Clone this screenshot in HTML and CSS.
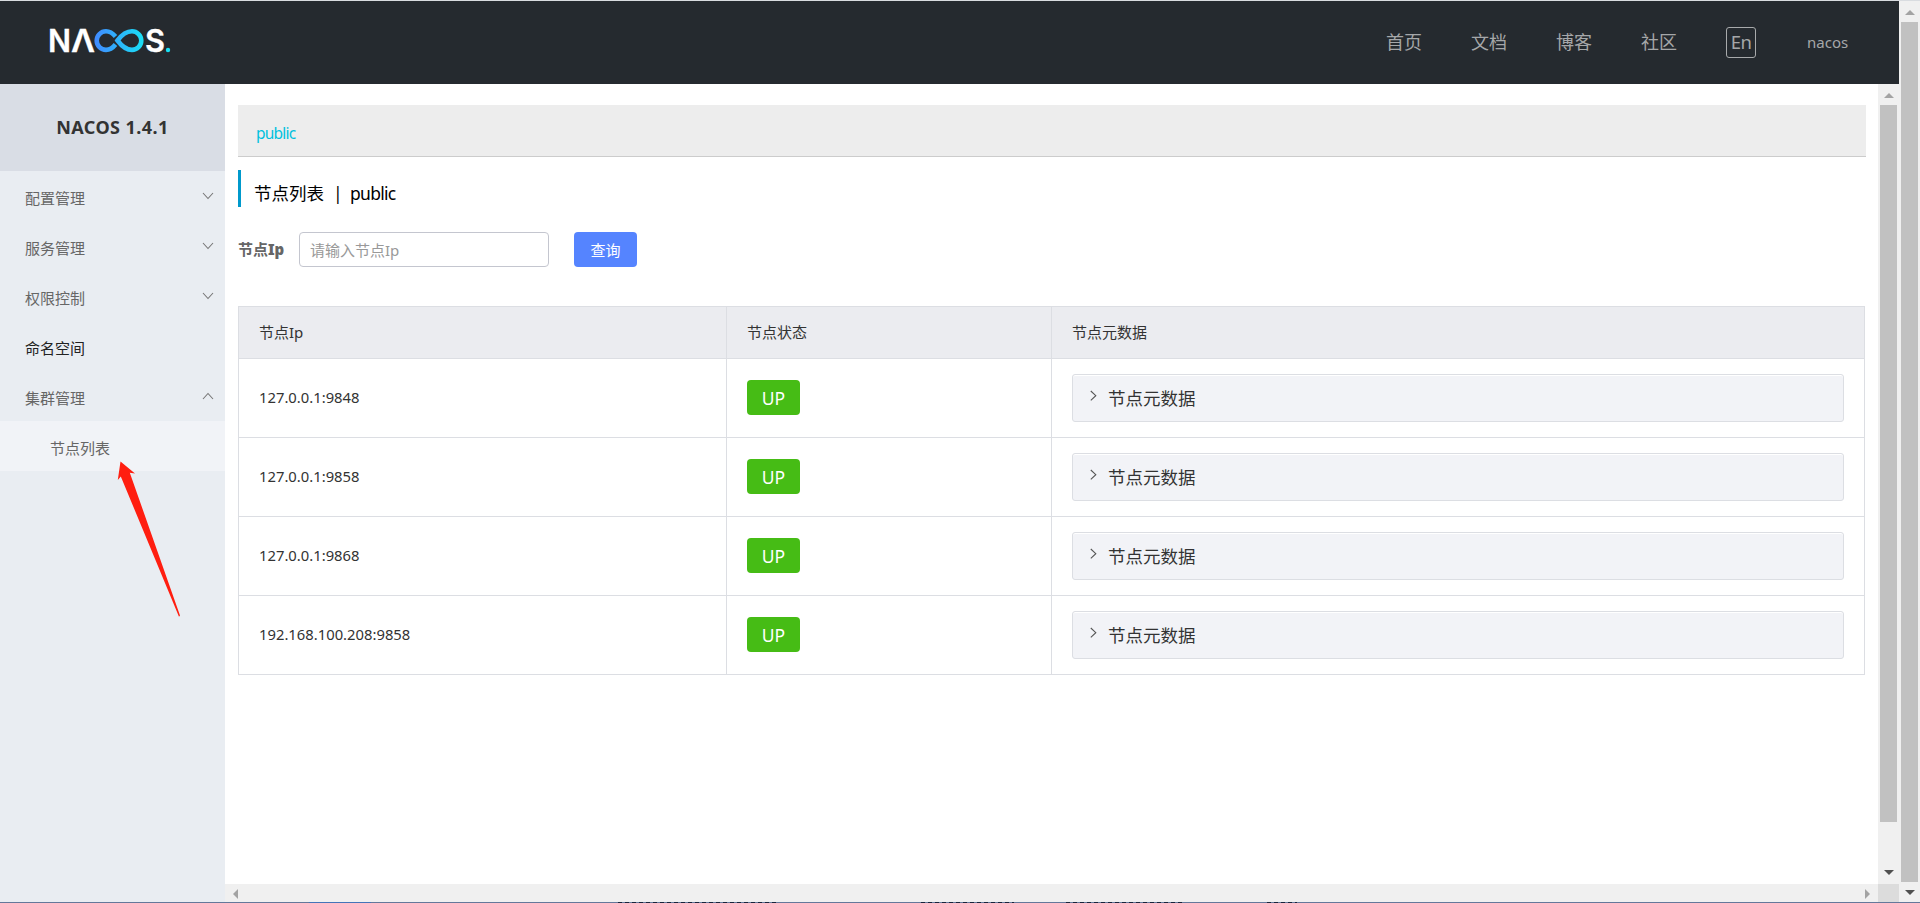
FILE: index.html
```html
<!DOCTYPE html>
<html lang="zh">
<head>
<meta charset="utf-8">
<title>Nacos</title>
<link rel="stylesheet" href="styles.css">
</head>
<body>
<div class="window">
  <div class="page">
    <header class="header">
      <svg class="logo" width="128" height="48" viewBox="-2 -10 128 48">
        <defs><linearGradient id="g" gradientUnits="userSpaceOnUse" x1="46" y1="0" x2="96" y2="0"><stop offset="0" stop-color="#4289ff"/><stop offset="1" stop-color="#18e0f5"/></linearGradient></defs>
        <g class="logo-text">
          <text x="0" y="25" textLength="23" lengthAdjust="spacingAndGlyphs">N</text>
          <text x="23" y="25" textLength="24" lengthAdjust="spacingAndGlyphs">Λ</text>
          <text x="97" y="25" textLength="20" lengthAdjust="spacingAndGlyphs">S</text>
        </g>
        <g fill="none" stroke="url(#g)" stroke-width="4.600">
          <path d="M67.500 9.500C64.500 6 61.500 4.300 58 4.300a9.300 9.300 0 0 0 0 18.600c3.500 0 6.500-1.700 9.500-5.400"/>
          <path d="M69.500 13.500C74 7.500 78 4.300 84 4.300a9.300 9.300 0 0 1 0 18.600c-6 0-10-3.400-14.500-9.400z"/>
        </g>
        <circle cx="120" cy="23" r="2.200" fill="#18e0f5"/>
      </svg>
      <nav class="nav">
        <span>首页</span><span>文档</span><span>博客</span><span>社区</span>
        <span class="lang">En</span>
        <span class="user">nacos</span>
      </nav>
    </header>
    <div class="body">
      <aside class="side">
        <div class="side-title"><span>NACOS 1.4.1</span></div>
        <div class="item"><span>配置管理</span><svg class="chev" viewBox="0 0 12 8"><path d="M1 1l5 5.500 5-5.500"/></svg></div>
        <div class="item"><span>服务管理</span><svg class="chev" viewBox="0 0 12 8"><path d="M1 1l5 5.500 5-5.500"/></svg></div>
        <div class="item"><span>权限控制</span><svg class="chev" viewBox="0 0 12 8"><path d="M1 1l5 5.500 5-5.500"/></svg></div>
        <div class="item dark"><span>命名空间</span></div>
        <div class="item"><span>集群管理</span><svg class="chev" viewBox="0 0 12 8"><path d="M1 7l5-5.500 5 5.500"/></svg></div>
        <div class="item sub"><span>节点列表</span></div>
        <svg class="arrow" width="66" height="160" viewBox="0 0 66 160"><path fill="#ff1e10" d="M5.500 1.500L20 13.500 14.800 12.700 65 155.500 64 156.700 5.800 16.500 2.800 20z"/></svg>
      </aside>
      <div class="scroller">
        <div class="view">
          <main class="main">
            <div class="crumb"><span>public</span></div>
            <h1 class="title"><span class="t1">节点列表</span><span class="bar">|</span><span class="t2">public</span></h1>
            <div class="form">
              <label>节点<b>Ip</b></label>
              <div class="input">请输入节点<i>Ip</i></div>
              <button class="btn">查询</button>
            </div>
            <div class="table">
              <div class="row head"><div>节点<i>Ip</i></div><div>节点状态</div><div>节点元数据</div></div>
              <div class="row"><div>127.0.0.1:9848</div><div><span class="tag">UP</span></div><div><div class="box"><svg viewBox="0 0 7 12"><path d="M.8 1l5 4.700-5 4.700"/></svg><span>节点元数据</span></div></div></div>
              <div class="row"><div>127.0.0.1:9858</div><div><span class="tag">UP</span></div><div><div class="box"><svg viewBox="0 0 7 12"><path d="M.8 1l5 4.700-5 4.700"/></svg><span>节点元数据</span></div></div></div>
              <div class="row"><div>127.0.0.1:9868</div><div><span class="tag">UP</span></div><div><div class="box"><svg viewBox="0 0 7 12"><path d="M.8 1l5 4.700-5 4.700"/></svg><span>节点元数据</span></div></div></div>
              <div class="row"><div>192.168.100.208:9858</div><div><span class="tag">UP</span></div><div><div class="box"><svg viewBox="0 0 7 12"><path d="M.8 1l5 4.700-5 4.700"/></svg><span>节点元数据</span></div></div></div>
            </div>
          </main>
          <div class="vbar inner"><svg viewBox="0 0 10 5"><path fill="#a3a3a3" d="M0 5h10L5 0z"/></svg><div class="thumb"></div><svg viewBox="0 0 10 5"><path fill="#505050" d="M0 0h10L5 5z"/></svg></div>
        </div>
        <div class="hbar"><svg viewBox="0 0 5 10"><path d="M5 0v10L0 5z"/></svg><svg viewBox="0 0 5 10"><path d="M0 0v10l5-5z"/></svg><div class="corner"></div></div>
      </div>
    </div>
  </div>
  <div class="vbar outer"><svg viewBox="0 0 10 5"><path fill="#a3a3a3" d="M0 5h10L5 0z"/></svg><div class="thumb"></div><svg viewBox="0 0 10 5"><path fill="#505050" d="M0 0h10L5 5z"/></svg></div>
</div>
<div class="edge"><i class="e1"></i><i class="e2"></i><i class="e3"></i><i class="e4"></i><i class="e5"></i></div>
</body>
</html>
```
FILE: styles.css
```css
* { box-sizing: border-box; }
html, body { margin: 0; height: 903px; overflow: hidden; }
body { font: 15px "Noto Sans", "Noto Sans CJK SC", sans-serif; color: #333; background: #fff; border-top: 1px solid #d9dce0; }
i { font-style: normal; }
.window { display: flex; height: 901px; }
.page { width: 1899px; display: flex; flex-direction: column; }
.header { height: 83px; background: #252a2f; display: flex; justify-content: space-between; padding: 16px 49px 0 46px; }
.logo-text { font: 600 31px Inter, sans-serif; fill: #fff; stroke: #fff; stroke-width: .3; }
.nav { display: flex; padding-top: 10px; color: #a5a7a9; font: 18px/29px "Noto Sans CJK SC", sans-serif; }
.nav span { width: 36px; margin-right: 49px; white-space: nowrap; }
.nav .lang { width: 30px; height: 31px; border: 1px solid #a8aaac; margin-right: 51px; border-radius: 3px; text-align: center; font: 18.500px/27px "Noto Sans", sans-serif; letter-spacing: -.5px; }
.nav .user { width: 43px; margin: 0; font: 15px/31px "Noto Sans", sans-serif; }
.body { flex: 1; display: flex; }
.side { width: 225px; background: #e9edf2; position: relative; }
.side-title { height: 87px; background: #d9dde5; text-align: center; font: 700 18px/86px "Noto Sans", sans-serif; letter-spacing: .45px; }
.item { height: 50px; display: flex; justify-content: space-between; padding: 0 11px 0 25px; line-height: 54px; color: #666; font-family: "Noto Sans CJK SC", sans-serif; }
.item.dark { color: #222; }
.item.sub { background: #f1f3f7; padding-left: 50px; }
.chev { width: 12px; height: 8px; margin-top: 21px; fill: none; stroke: #777; stroke-width: 1.100; }
.arrow { position: absolute; left: 115px; top: 376px; }
.scroller { flex: 1; display: flex; flex-direction: column; }
.view { height: 800px; display: flex; }
.main { width: 1653px; padding: 21px 12px 0 13px; }
.crumb { height: 52px; background: #ededed; border-bottom: 1px solid #ccc; padding-left: 18px; font-size: 15.500px; line-height: 57px; letter-spacing: -.8px; color: #00c1de; }
.title { margin: 13px 0 25px; height: 37px; border-left: 3px solid #09c; padding-left: 13px; color: #000; font-size: 17.500px; line-height: 46px; font-weight: 400; display: flex; }
.t1 { font-family: "Noto Sans CJK SC", sans-serif; width: 79px; }
.bar { width: 17px; }
.t2 { letter-spacing: -.7px; }
.form { display: flex; height: 35px; line-height: 35px; }
label { width: 61px; color: #666; font-weight: 700; }
.input { width: 250px; border: 1px solid #c4c6cf; border-radius: 4px; padding-left: 10px; color: #999; }
.btn { width: 63px; margin-left: 25px; padding: 0; border: 0; border-radius: 4px; background: #5584ff; color: #fff; font: 15px/33px "Noto Sans CJK SC", sans-serif; }
.table { margin-top: 39px; width: 1627px; border: 1px solid #dcdee3; border-bottom: 0; }
.row { height: 79px; display: grid; grid-template-columns: 487px 325px 1fr; border-bottom: 1px solid #dcdee3; font-size: 14.800px; line-height: 76px; }
.row > div { padding-left: 20px; border-left: 1px solid #dcdee3; display: flex; }
.row > div:first-child { border-left: 0; }
.head { height: 52px; background: #ebecf0; font-size: 15px; line-height: 51px; }
.tag { width: 53px; height: 35px; margin-top: 21px; border-radius: 4px; background: #46bc15; color: #fff; text-align: center; font-size: 17.500px; line-height: 36px; }
.box { width: 772px; height: 48px; margin-top: 15px; border: 1px solid #dcdee3; border-radius: 3px; background: #f2f3f7; box-shadow: inset 0 1px #fff; display: flex; padding-left: 17px; font: 17.500px/46px "Noto Sans CJK SC", sans-serif; }
.box svg { width: 7px; height: 12px; margin: 15px 11px 0 0; fill: none; stroke: #555; stroke-width: 1.100; }
.vbar { width: 21px; background: #f0f0f0; display: flex; flex-direction: column; align-items: center; }
.vbar svg { width: 10px; height: 5px; }
.vbar .thumb { width: 17px; background: #c1c1c1; }
.inner svg:first-child { margin: 9px 0 7px; }
.inner .thumb { height: 717px; }
.inner svg:last-child { margin-top: 48px; }
.outer svg:first-child { margin: 9px 0 7px; }
.outer .thumb { height: 860px; }
.outer svg:last-child { margin-top: 8px; }
.hbar { height: 18px; background: #f0f0f0; display: flex; align-items: center; }
.hbar svg { width: 5px; height: 10px; margin: 2px 0 0 8px; fill: #a3a3a3; }
.hbar svg + svg { margin-left: auto; margin-right: 8px; }
.corner { width: 21px; height: 18px; background: #dcdcdc; }
.edge { height: 1px; background: #64789a; display: flex; }
.edge i { height: 1px; background: repeating-linear-gradient(90deg, #17243b 0 4px, #64789a 4px 7px); }
.edge .e1 { margin-left: 309px; width: 62px; background: #4474b8; }
.e2 { margin-left: 247px; width: 159px; }
.e3 { margin-left: 144px; width: 93px; }
.e4 { margin-left: 52px; width: 117px; }
.e5 { margin-left: 84px; width: 30px; }
```
